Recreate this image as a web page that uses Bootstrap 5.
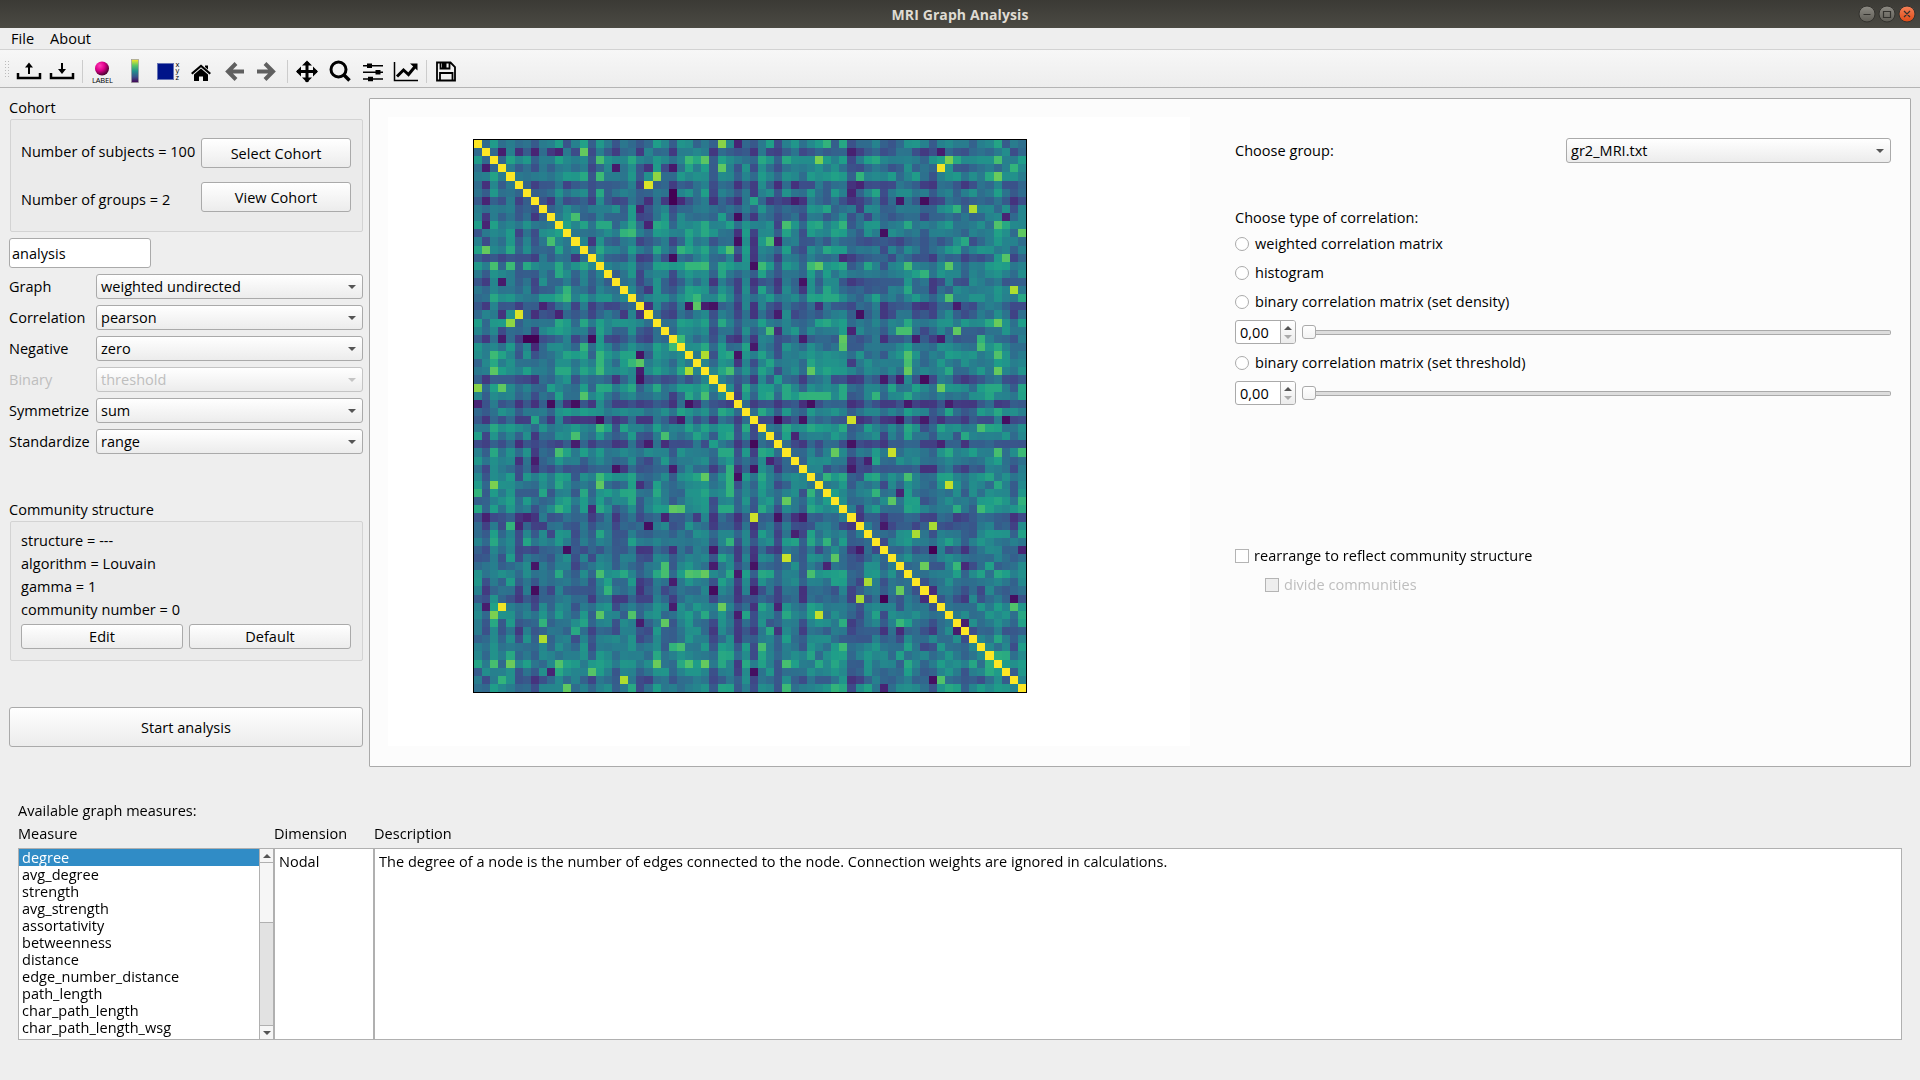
<!DOCTYPE html>
<html lang="en">
<head>
<meta charset="utf-8">
<title>MRI Graph Analysis</title>
<link rel="stylesheet" href="https://cdn.jsdelivr.net/npm/bootstrap@5.3.0/dist/css/bootstrap.min.css">
<style>
body{width:1920px;height:1080px;overflow:hidden;background:#eee;color:#000;font:14.5px/23px "Open Sans","Noto Sans",sans-serif;letter-spacing:.03px;white-space:nowrap}
.titlebar{height:28px;background:linear-gradient(#3b3a35,#4b4a43);color:#dfdbd2;font-weight:700;font-size:14px;letter-spacing:.1px}
.winbtns{right:3px;top:5px}
.menubar{height:22px;border-bottom:1px solid #d2d2d2;padding-left:11px;gap:16px;line-height:21px}
.toolbar{height:38px;background:linear-gradient(#f7f7f7,#ededed);border-bottom:1px solid #b4b4b4}
.workspace{height:688px}
.side{width:369px;padding:8px 6px 0 9px}
.sunken{background:#ebebeb;border:1px solid #d3d3d3;border-radius:2px;margin-left:1px;padding:0 11px 0 10px}
.btn.qt{background:linear-gradient(#fff,#ececec);border:1px solid #aaa;border-radius:3px;color:#000;font:inherit;letter-spacing:inherit;padding:0;display:flex;align-items:center;justify-content:center}
.combo{height:25px;background:linear-gradient(#fff,#ececec);border:1px solid #aaa;border-radius:3px;padding:0 6px 0 4px;line-height:23px}
.combo::after{content:"";border:4px solid transparent;border-top:4px solid #555;border-bottom:0}
.off{color:#bebebe}
.off .combo{border-color:#c4c4c4}
.off .combo::after{border-top-color:#c4c4c4}
.fieldname{width:87px;padding-top:1px}
.nameinput{width:142px;height:30px;background:#fff;border:1px solid #aaa;border-radius:3px;padding-left:2px;line-height:29px}
.viewer{width:1542px;height:669px;margin-top:10px;background:#fcfcfc;border:1px solid #aaa;border-radius:1px}
.figure-area{width:802px;height:629px;margin:18px 0 0 18px;background:#fff;padding:22px 0 0 85px}
.figure-area canvas{border:1px solid #000;display:block}
.options{width:656px;margin-left:45px;padding-top:39px}
.dot{width:14px;height:14px;border:1px solid #aaa;background:#fff;border-radius:50%;margin-right:6px}
.tick{width:14px;height:14px;border:1px solid #b4b4b4;background:#fff;margin-right:5px}
.spin{width:61px;height:24px;border:1px solid #aaa;border-radius:3px;background:#fff;overflow:hidden}
.spin b{width:15px;border-left:1px solid #aaa;background:linear-gradient(#fff,#ececec);gap:5px}
.up{border:4px solid transparent;border-bottom:4px solid #555;border-top:0;width:0;height:0}
.down{border:4px solid transparent;border-top:4px solid #555;border-bottom:0;width:0;height:0}
.spin .down{border-top-color:#aaa}
.knob{width:14px;height:14px;border:1px solid #aaa;border-radius:3px;background:linear-gradient(#fff,#f3f3f3);margin-left:6px}
.groove{height:5px;border:1px solid #aaa;border-left:0;border-radius:0 2px 2px 0;background:#ddd}
.measures{padding:23px 0 0 18px}
.pane{border:1px solid #b0b0b0;background:#fff;height:192px}
.names{line-height:17px}
.names div{padding-left:3px;height:17px}
.names .sel{background:#308cc6;color:#fff}
.sbar{width:14px;border-left:1px solid #b0b0b0;background:#e2e2e2}
.sbar i{display:flex;align-items:center;justify-content:center;background:#f6f6f6}
</style>
<script src="https://cdn.jsdelivr.net/npm/bootstrap@5.3.0/dist/js/bootstrap.bundle.min.js"></script>
</head>
<body>
<header class="titlebar position-relative d-flex justify-content-center align-items-center">
  <span>MRI Graph Analysis</span>
  <svg class="winbtns position-absolute" width="60" height="18" viewBox="0 0 60 18">
    <defs><linearGradient id="gr" x2="0" y2="1"><stop stop-color="#8d8b84"/><stop offset="1" stop-color="#5f5d56"/></linearGradient><linearGradient id="or" x2="0" y2="1"><stop stop-color="#f58259"/><stop offset="1" stop-color="#df4a16"/></linearGradient></defs>
    <g stroke="#33322e"><circle cx="10" cy="9" r="8" fill="url(#gr)"/><circle cx="30" cy="9" r="8" fill="url(#gr)"/><circle cx="50" cy="9" r="8" fill="url(#or)"/></g>
    <path d="M6.500 9.500h7M26.500 6.500h7v6h-7zM47 6l6 6m0-6l-6 6" fill="none" stroke="#33322e" stroke-width="1.200"/>
  </svg>
</header>
<nav class="menubar d-flex"><span>File</span><span>About</span></nav>
<div class="toolbar">
<svg width="480" height="37" viewBox="0 50 480 37" style="display:block">
  <defs>
    <radialGradient id="ball" cx=".35" cy=".3" r=".75"><stop stop-color="#ff3db5"/><stop offset=".45" stop-color="#e0008c"/><stop offset="1" stop-color="#3d0026"/></radialGradient>
    <linearGradient id="vir" x2="0" y2="1"><stop stop-color="#fde725"/><stop offset=".25" stop-color="#5ec962"/><stop offset=".5" stop-color="#21918c"/><stop offset=".75" stop-color="#3b528b"/><stop offset="1" stop-color="#440154"/></linearGradient>
  </defs>
  <path d="M5.500 61v18M8.500 61v18" stroke="#bbb" stroke-dasharray="1 2"/>
  <path d="M82.500 60v23M287.500 60v23M426.500 60v23" stroke="#ccc"/>
  <g fill="none" stroke="#000" stroke-width="2.500"><path d="M18 73v5h22v-5M51 73v5h22v-5"/><path d="M29 74v-7M62 63v7" stroke-width="2"/></g>
  <path d="M29 62.500l4 5h-8zM62 74l4-5h-8z"/>
  <circle cx="102" cy="68.500" r="7" fill="url(#ball)"/>
  <text x="92" y="82.500" font-size="7.500" textLength="21" font-family="Open Sans,sans-serif">LABEL</text>
  <rect x="131.500" y="59.500" width="7" height="23" fill="url(#vir)" stroke="#999" stroke-width=".7"/>
  <rect x="157.500" y="63.500" width="16" height="16" fill="#001489" stroke="#6674b5"/>
  <g font-size="7.500" font-family="Open Sans,sans-serif"><text x="175.500" y="67">x</text><text x="175.500" y="73">y</text><text x="175.500" y="79.500">z</text></g>
  <path d="M191 73l10-8.500 10 8.500-1.500 1.500-8.500-7.200-8.500 7.200zM194 74.500l7-6 7 6V81h-5v-4.500h-4V81h-5zM205 65.500h3v4l-3-2.500z"/>
  <g fill="none" stroke="#606060" stroke-width="4"><path d="M236 63.500l-8 8 8 8M229 71.500h15M265 63.500l8 8-8 8M272 71.500h-15"/></g>
  <path d="M297 71.500h20M307 62v20" stroke="#000" stroke-width="3"/>
  <path d="M296 71.500l5-5v10zM318 71.500l-5-5v10zM307 60.500l5 5h-10zM307 82.500l5-5h-10z"/>
  <circle cx="338.500" cy="69.500" r="7.500" fill="none" stroke="#000" stroke-width="3"/><path d="M343.500 74.500l6 6" stroke="#000" stroke-width="3.500"/>
  <path d="M363 65.800h20M363 72.300h20M363 78.900h20" stroke="#000" stroke-width="1.500"/>
  <path d="M367 63.500h5v4.500h-5zM375.500 70h5v4.500h-5zM368 76.700h5v4.500h-5z"/>
  <path d="M394.500 62v18.500H418" fill="none" stroke="#000" stroke-width="1.500"/>
  <path d="M397 76.500l6.500-6.500 5 4.500 7-8.500" fill="none" stroke="#000" stroke-width="3"/><path d="M410 63.500h7.500v7z"/>
  <path d="M437 62.500h13.500l4.500 4.500v13.500h-18zM440 80v-7h12.500v7M440.500 63v5.500h9V63" fill="none" stroke="#000" stroke-width="1.800"/><path d="M442 63h4.500v5H442z"/>
</svg>
</div>

<main class="workspace d-flex">
  <aside class="side">
    <div>Cohort</div>
    <section class="sunken d-flex justify-content-between" style="height:113px">
      <div style="padding-top:20px"><div style="margin-bottom:25px">Number of subjects = 100</div><div>Number of groups = 2</div></div>
      <div style="padding-top:18px;width:150px"><div class="btn qt" style="height:30px;margin-bottom:14px">Select Cohort</div><div class="btn qt" style="height:30px">View Cohort</div></div>
    </section>
    <div class="nameinput" style="margin-top:6px">analysis</div>
    <div class="d-flex flex-column" style="gap:6px;margin-top:6px">
      <div class="d-flex"><span class="fieldname">Graph</span><div class="combo flex-fill d-flex justify-content-between align-items-center">weighted undirected</div></div>
      <div class="d-flex"><span class="fieldname">Correlation</span><div class="combo flex-fill d-flex justify-content-between align-items-center">pearson</div></div>
      <div class="d-flex"><span class="fieldname">Negative</span><div class="combo flex-fill d-flex justify-content-between align-items-center">zero</div></div>
      <div class="d-flex off"><span class="fieldname">Binary</span><div class="combo flex-fill d-flex justify-content-between align-items-center">threshold</div></div>
      <div class="d-flex"><span class="fieldname">Symmetrize</span><div class="combo flex-fill d-flex justify-content-between align-items-center">sum</div></div>
      <div class="d-flex"><span class="fieldname">Standardize</span><div class="combo flex-fill d-flex justify-content-between align-items-center">range</div></div>
    </div>
    <div style="margin-top:44px">Community structure</div>
    <section class="sunken" style="height:140px;padding-top:7px">
      <div>structure = ---</div><div>algorithm = Louvain</div><div>gamma = 1</div><div>community number = 0</div>
      <div class="d-flex" style="gap:6px;margin-top:3px"><div class="btn qt flex-fill w-50" style="height:25px">Edit</div><div class="btn qt flex-fill w-50" style="height:25px">Default</div></div>
    </section>
    <div class="btn qt" style="height:40px;margin-top:46px">Start analysis</div>
  </aside>

  <section class="viewer d-flex">
    <div class="figure-area"><canvas id="matrix" width="552" height="552"></canvas></div>
    <div class="options">
      <div class="d-flex justify-content-between"><span style="padding-top:1px">Choose group:</span><div class="combo d-flex justify-content-between align-items-center" style="width:325px">gr2_MRI.txt</div></div>
      <div style="margin-top:43px">Choose type of correlation:</div>
      <div class="d-flex align-items-center" style="margin-top:3px"><i class="dot"></i>weighted correlation matrix</div>
      <div class="d-flex align-items-center" style="margin-top:6px"><i class="dot"></i>histogram</div>
      <div class="d-flex align-items-center" style="margin-top:6px"><i class="dot"></i>binary correlation matrix (set density)</div>
      <div class="d-flex align-items-center" style="margin-top:7px"><div class="spin d-flex justify-content-between"><span class="ps-1">0,00</span><b class="d-flex flex-column align-items-center justify-content-center"><i class="up"></i><i class="down"></i></b></div><i class="knob"></i><i class="groove flex-fill"></i></div>
      <div class="d-flex align-items-center" style="margin-top:7px"><i class="dot"></i>binary correlation matrix (set threshold)</div>
      <div class="d-flex align-items-center" style="margin-top:7px"><div class="spin d-flex justify-content-between"><span class="ps-1">0,00</span><b class="d-flex flex-column align-items-center justify-content-center"><i class="up"></i><i class="down"></i></b></div><i class="knob"></i><i class="groove flex-fill"></i></div>
      <div class="d-flex align-items-center" style="margin-top:139px"><i class="tick"></i>rearrange to reflect community structure</div>
      <div class="d-flex align-items-center off" style="margin:6px 0 0 30px"><i class="tick" style="background:#eee"></i>divide communities</div>
    </div>
  </section>
</main>

<section class="measures">
  <div>Available graph measures:</div>
  <div class="d-flex"><span style="width:256px">Measure</span><span style="width:100px">Dimension</span><span>Description</span></div>
  <div class="d-flex" style="margin-top:3px">
    <div class="pane d-flex" style="width:256px">
      <div class="names flex-fill"><div class="sel">degree</div><div>avg_degree</div><div>strength</div><div>avg_strength</div><div>assortativity</div><div>betweenness</div><div>distance</div><div>edge_number_distance</div><div>path_length</div><div>char_path_length</div><div>char_path_length_wsg</div></div>
      <div class="sbar d-flex flex-column justify-content-between"><div><i style="height:14px;border-bottom:1px solid #b0b0b0"><span class="up"></span></i><i style="height:60px;border-bottom:1px solid #b0b0b0"></i></div><i style="height:14px;border-top:1px solid #b0b0b0"><span class="down"></span></i></div>
    </div>
    <div class="pane" style="width:100px;padding:1px 4px">Nodal</div>
    <div class="pane" style="width:1528px;padding:1px 4px">The degree of a node is the number of edges connected to the node. Connection weights are ignored in calculations.</div>
  </div>
</section>

<script>
// Symmetric correlation matrix: regional strength + pairwise variation + notable pairs.
const strength = [4,-13,15,-4,14,-14,0,-18,0,-7,14,7,-5,9,-11,14,6,-8,0,14,-16,-12,12,1,-15,6,11,7,14,-11,13,8,-22,9,-22,11,6,-20,10,2,-14,12,6,10,8,11,-17,-12,1,9,-12,-3,0,12,0,-10,-11,3,11,2,-9,0,4,10,15,3,-5,9];
const pairs = `0:30 82,32 10,43 65;1:3 8,7 10,10 10,13 76,21 45,57 8,46 9;2:15 70,26 68,28 74,42 80,58 80,64 70
3:17 7,24 7,30 75,57 98,66 65;4:22 83,15 68,47 65,64 77;5:21 95,47 10;6:24 0,20 30,46 10;7:24 0,25 12,34 58,39 8,52 6,55 3
8:20 10,61 88,59 65;9:12 70,32 3,23 52,65 10;10:21 10,38 70,64 72,45 65;11:18 65,19 68,50 4,67 75;12:32 4,36 70,60 60,37 8
13:31 72,25 65;14:24 3,65 73,45 12;15:34 4,26 66,27 66,28 68,35 68,41 68,42 75,53 70,58 74;16:55 65;17:40 5;18:66 88
19:27 67,58 72;20:26 5,27 74,28 8,29 5,42 14,59 8;21:47 4,37 8;22:64 77;23:36 70,52 70,53 70,59 75,46 10
24:25 68,45 75,57 8,54 8,62 65,40 8;25:45 73,62 70,34 7;26:28 88,53 72,64 72,32 5;27:53 70;28:31 70,41 75,53 76,64 76
29:50 7,55 3,52 8,37 55;30:57 77;31:40 64,41 65,42 65,43 65,49 65;32:41 4,53 7,58 8;34:46 93,37 2,40 5,52 5,65 4,55 7
35:62 70,53 60;36:60 60,39 10;37:46 5,57 10;38:44 76,51 92,64 70,67 68;39:48 9,46 14;40:46 7;41:53 70,43 65
42:58 91;43:49 65,52 10;44:51 74,67 65;45:59 62,62 68;47:50 7,56 87;48:54 87;50:56 0,67 10;52:55 77,59 67,60 12
56:66 4;57:66 72;59:60 8;63:64 62,65 61`;
const ramp = [[68,1,84],[72,40,120],[62,74,137],[49,104,142],[38,130,142],[31,158,137],[53,183,121],[109,205,89],[180,222,44],[253,231,37]];
function tint(v){const t=Math.max(0,Math.min(.9999,v))*9,i=Math.floor(t),f=t-i;return 'rgb('+ramp[i].map((c,k)=>Math.round(c+(ramp[i+1][k]-c)*f))+')';}
const n=68,m=[];let seed=20177;
function rnd(){seed=(seed*1103515245+12345)%2147483648;return seed/2147483648;}
for(let r=0;r<n;r++)m.push([]);
for(let r=0;r<n;r++)for(let c=r;c<n;c++){
  const jitter=(rnd()+rnd()+rnd()-1.5)*.135;
  let v=.378+.0064*(strength[r]+strength[c])+jitter;
  if(v<.13)v=.13+rnd()*.06;
  m[r][c]=m[c][r]=r===c?1:Math.min(.6,v);
}
pairs.split(/[;\n]/).forEach(line=>{const [r,list]=line.split(':');list.split(',').forEach(p=>{const [c,v]=p.split(' ').map(Number);m[+r][c]=m[c][+r]=v/100;});});
const g=document.getElementById('matrix').getContext('2d'),edge=k=>Math.round(k*552/n);
for(let r=0;r<n;r++)for(let c=0;c<n;c++){g.fillStyle=tint(m[r][c]);g.fillRect(edge(c),edge(r),edge(c+1)-edge(c),edge(r+1)-edge(r));}
</script>
</body>
</html>
